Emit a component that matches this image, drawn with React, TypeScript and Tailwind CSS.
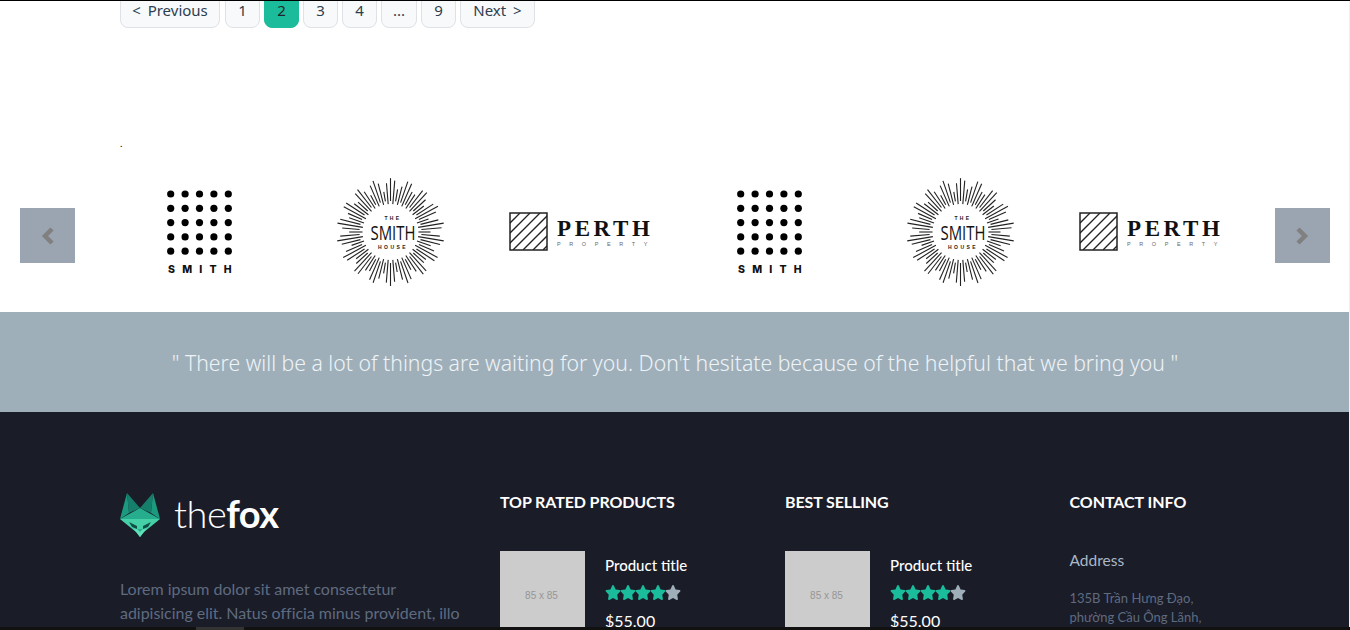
const pages = [
  { label: "< Previous", w: "w-[100px] mr-px" },
  { label: "1", w: "w-[35px]" },
  { label: "2", w: "w-[35px]", active: true },
  { label: "3", w: "w-[35px]" },
  { label: "4", w: "w-[35px]" },
  { label: "...", w: "w-[36px]" },
  { label: "9", w: "w-[35px]" },
  { label: "Next >", w: "w-[75px]" },
];

function SmithLogo() {
  const xs = [170.7, 185.1, 199.5, 213.9, 228.3];
  const ys = [194, 208.3, 222.6, 236.9, 251.2];
  return (
    <svg width="190" height="120" viewBox="105 172 190 120">
      {ys.map((y) => xs.map((x) => <circle key={`${x}-${y}`} cx={x} cy={y} r="3.6" fill="#000" />))}
      <text x="200" y="272.5" textAnchor="middle" fontFamily="Inter, sans-serif" fontWeight="800" fontSize="10.5" letterSpacing="7.2" fill="#111" dx="3.5">SMITH</text>
    </svg>
  );
}

function SunLogo() {
  const cx = 95.5;
  const cy = 60;
  const rays = Array.from({ length: 76 }, (_, i) => {
    const a = (i / 76) * Math.PI * 2;
    const inner = 28 + (i % 2) * 3;
    const outer = 40 + 14 * Math.abs(Math.sin(i * 2.4));
    return {
      x1: cx + Math.cos(a) * inner,
      y1: cy + Math.sin(a) * inner,
      x2: cx + Math.cos(a) * outer,
      y2: cy + Math.sin(a) * outer,
    };
  });
  return (
    <svg width="190" height="120" viewBox="0 0 190 120">
      {rays.map((r, i) => (
        <line key={i} x1={r.x1} y1={r.y1} x2={r.x2} y2={r.y2} stroke="#222" strokeWidth="1.1" />
      ))}
      <text x="98" y="47.5" textAnchor="middle" fontFamily="Liberation Sans, sans-serif" fontWeight="700" fontSize="5" letterSpacing="2.4" fill="#222">THE</text>
      <text x="98" y="68" textAnchor="middle" fontFamily="Open Sans, sans-serif" fontSize="20" textLength="45" lengthAdjust="spacingAndGlyphs" fill="#111">SMITH</text>
      <text x="98" y="76.5" textAnchor="middle" fontFamily="Liberation Sans, sans-serif" fontWeight="700" fontSize="5" letterSpacing="2.4" fill="#222">HOUSE</text>
    </svg>
  );
}

function PerthLogo() {
  return (
    <svg width="190" height="120" viewBox="485 172 190 120">
      <defs>
        <clipPath id="perth-box">
          <rect x="510" y="213" width="37" height="37" />
        </clipPath>
      </defs>
      <g clipPath="url(#perth-box)" stroke="#222" strokeWidth="1.3">
        {[0, 1, 2, 3, 4, 5, 6, 7].map((i) => (
          <line key={i} x1={473 + i * 10} y1="250" x2={473 + i * 10 + 37} y2="213" />
        ))}
      </g>
      <rect x="510" y="213" width="37" height="37" fill="none" stroke="#222" strokeWidth="1.5" />
      <text x="557" y="236" fontFamily="Liberation Serif, serif" fontWeight="700" fontSize="23" letterSpacing="3.6" fill="#111">PERTH</text>
      <text x="557" y="246" fontFamily="Liberation Sans, sans-serif" fontSize="5.5" letterSpacing="8.6" fill="#666">PROPERTY</text>
    </svg>
  );
}

function FoxLogo() {
  return (
    <svg width="40" height="46" viewBox="0 0 40 46">
      <polygon points="7,2 20,17 9,22" fill="#157f6b" />
      <polygon points="33,2 20,17 31,22" fill="#157f6b" />
      <polygon points="7,2 9,22 0,28" fill="#1c9a80" />
      <polygon points="33,2 31,22 40,28" fill="#1c9a80" />
      <polygon points="20,17 40,28 0,28" fill="#25ad8e" />
      <polygon points="0,28 20,28 20,46 16,41" fill="#45d0a8" />
      <polygon points="40,28 20,28 20,46 24,41" fill="#45d0a8" />
      <polygon points="9,31 17,35 17,38 12,36" fill="#0f4f46" />
      <polygon points="31,31 23,35 23,38 28,36" fill="#0f4f46" />
      <polygon points="14,38 26,38 20,46" fill="#5fe0b8" />
      <polygon points="17,38 23,38 20,41" fill="#2bb08f" />
    </svg>
  );
}

function Chevron({ right }: { right?: boolean }) {
  return (
    <svg width="14" height="20" viewBox="0 0 14 20" fill="none" stroke="#808080" strokeWidth="4.5">
      <polyline points={right ? "3,3 10,10 3,17" : "11,3 4,10 11,17"} />
    </svg>
  );
}

function Star({ color }: { color: string }) {
  return (
    <svg width="16" height="15" viewBox="0 0 576 512" preserveAspectRatio="none" className="-mx-[0.5px] shrink-0" fill={color}>
      <path d="M259.3 17.8L194 150.2 47.9 171.5c-26.2 3.8-36.7 36.1-17.7 54.6l105.7 103-25 145.5c-4.5 26.3 23.2 46 46.4 33.7L288 439.6l130.7 68.7c23.2 12.2 50.9-7.4 46.4-33.7l-25-145.5 105.7-103c19-18.5 8.5-50.8-17.7-54.6L382 150.2 316.7 17.8c-11.7-23.6-45.6-23.9-57.4 0z" />
    </svg>
  );
}

function Stars() {
  return (
    <div className="flex h-4 items-center">
      <Star color="#1abc9c" />
      <Star color="#1abc9c" />
      <Star color="#1abc9c" />
      <Star color="#1abc9c" />
      <Star color="#9eafba" />
    </div>
  );
}

function ProductCol({ title }: { title: string }) {
  return (
    <div className="w-[285px] shrink-0">
      <h3 className="font-bold text-white text-[16px] leading-5 tracking-[-0.1px] mt-[80px]">{title}</h3>
      <div className="flex gap-5 mt-[39px]">
        <div className="w-[85px] h-[85px] bg-[#cccccc] flex items-center justify-center pt-1 pr-[2px] text-[10px] text-[#969696] font-['Liberation_Sans',sans-serif]">
          85 x 85
        </div>
        <div>
          <p className="text-white text-[15px] leading-5 font-medium mt-1">Product title</p>
          <div className="mt-[9px]"><Stars /></div>
          <p className="text-white text-[16px] leading-5 mt-[11px]">$55.00</p>
        </div>
      </div>
    </div>
  );
}

export default function App() {
  return (
    <div className="relative h-[630px] w-[1350px] overflow-hidden bg-white font-['Lato',sans-serif]">
      <div className="h-px bg-black relative z-10" />
      <div className="flex gap-1 pl-[120px] -mt-[11px] font-['Noto_Sans',sans-serif] text-[15px] [word-spacing:3px]">
        {pages.map((p) => (
          <div
            key={p.label}
            className={
              p.active
                ? `${p.w} h-[38px] pt-[3px] rounded-lg border border-[#1abc9c] bg-[#1abc9c] flex items-center justify-center text-[#212529]`
                : `${p.w} h-[38px] pt-[3px] rounded-lg border border-[#dee2e6] bg-[#f8f9fa] flex items-center justify-center text-[#2c3e50]`
            }
          >
            {p.label}
          </div>
        ))}
      </div>
      <div className="pl-[120px] mt-[107px] h-[37px] text-[10px] leading-[16px] text-black">.</div>
      <div className="flex items-start justify-between px-5 h-[140px]">
        <div className="mt-[36px] w-[55px] h-[55px] bg-[#9aa5b1] flex items-center justify-center shrink-0">
          <Chevron />
        </div>
        <div className="flex w-[1140px] shrink-0">
          <SmithLogo />
          <SunLogo />
          <PerthLogo />
          <SmithLogo />
          <SunLogo />
          <PerthLogo />
        </div>
        <div className="mt-[36px] w-[55px] h-[55px] bg-[#9aa5b1] flex items-center justify-center pr-[2px] shrink-0">
          <Chevron right />
        </div>
      </div>
      <div className="h-[100px] pt-px bg-[#9eafba] flex items-center justify-center text-[21.2px] font-light text-[#eef3f6] font-['Noto_Sans',sans-serif]">
        " There will be a lot of things are waiting for you. Don't hesitate because of the helpful that we bring you "
      </div>
      <div className="h-[218px] bg-[#1a1c28] flex pl-[120px]">
        <div className="w-[380px] shrink-0">
          <div className="flex items-center gap-[14px] mt-[79px]">
            <FoxLogo />
            <span className="text-[38px] leading-[46px] -mt-[2px] text-white font-light tracking-[-0.5px]">
              the<span className="font-bold">fox</span>
            </span>
          </div>
          <p className="mt-[40px] text-[16px] leading-6 text-[#5f6b80] w-[345px] tracking-[-0.03px]">
            Lorem ipsum dolor sit amet consectetur adipisicing elit. Natus officia minus provident, illo
          </p>
        </div>
        <ProductCol title="TOP RATED PRODUCTS" />
        <ProductCol title="BEST SELLING" />
        <div className="w-[160px] -ml-[0.5px]">
          <h3 className="font-bold text-white text-[16px] leading-5 tracking-[-0.05px] mt-[80px]">CONTACT INFO</h3>
          <p className="mt-[38px] text-[15.5px] leading-5 text-[#a9b8c6]">Address</p>
          <p className="mt-[19px] text-[13px] leading-[19px] text-[#5f6b80]">
            135B Trần Hưng Đạo,
            <br />
            phường Cầu Ông Lãnh,
          </p>
        </div>
      </div>
      <div className="absolute left-0 bottom-0 w-full h-[3px] bg-[#111111]">
        <div className="ml-[196px] w-[48px] h-full bg-[#333333]" />
      </div>
      <div className="absolute right-0 top-px bottom-[3px] w-px bg-[#f1f1f1]" />
    </div>
  );
}
